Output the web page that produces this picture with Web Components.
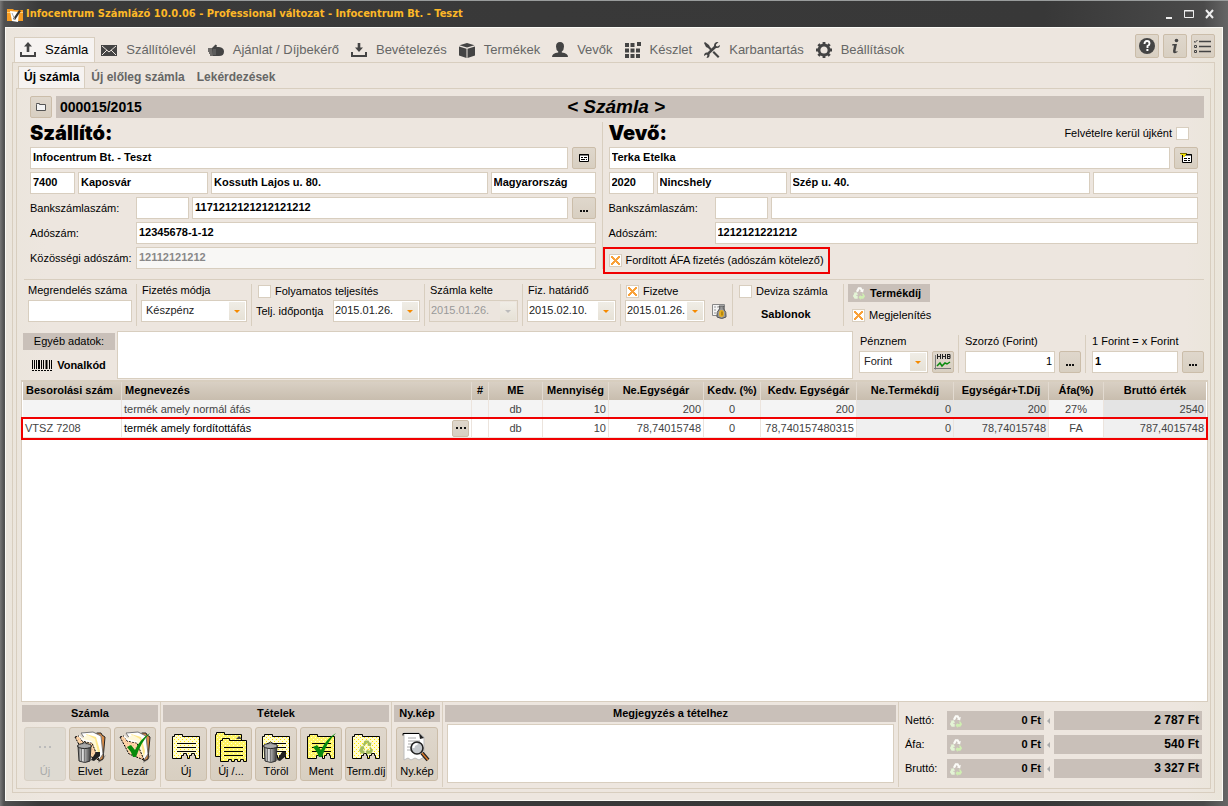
<!DOCTYPE html>
<html lang="hu">
<head>
<meta charset="utf-8">
<meta name="viewport" content="width=device-width, initial-scale=1">
<title>Infocentrum Számlázó</title>
<style>
  body { margin: 0; font: 11px/13px "Liberation Sans", Arial, sans-serif; color: #000;
    --paper: #ede6df; --line: #d8cebf; --bar: #c9c0b9; --accent: #f9a13a; --ink: #444; }
</style>
</head>
<body>
<app-window heading="Infocentrum Számlázó 10.0.06 - Professional változat - Infocentrum Bt. - Teszt">
  <main-tabs></main-tabs>
  <invoice-page></invoice-page>
</app-window>

<script>
const NOTE = '<path d="M2.500 5.500h2v-2h8v2h17v22h-4v-3h-1v-2h-3v2h-2v3h-2v-3h-1v-2h-3v2h-2v3h-9z" fill="url(#dots)" stroke="#000"/>';
const LINES = '<path d="M7 12.500h19M7 16.500h19M7 20.500h19" stroke="#000"/>';
const DOTS = '<defs><pattern id="dots" width="4" height="4" patternUnits="userSpaceOnUse"><path fill="#fffcd0" d="M0 0h4v4H0z"/><path fill="#ffe600" d="M0 0h1v1H0zM2 2h1v1H2z"/></pattern><pattern id="gold" width="4" height="4" patternUnits="userSpaceOnUse"><path fill="#fff565" d="M0 0h4v4H0z"/><path fill="#fffcd8" d="M0 0h1v1H0zM2 2h1v1H2z"/></pattern><pattern id="peach" width="4" height="4" patternUnits="userSpaceOnUse"><path fill="#fdd5a6" d="M0 0h4v4H0z"/><path fill="#f0b096" d="M0 0h1v1H0zM2 2h1v1H2z"/></pattern><linearGradient id="steel"><stop stop-color="#555"/><stop offset=".3" stop-color="#e8e8e8"/><stop offset=".6" stop-color="#999"/><stop offset="1" stop-color="#333"/></linearGradient></defs>';
const TRASH = '<path d="M17 29l5-8h4v4l-6 5z" fill="#222"/><path d="M4 15h13l-1 15q-5 3-11 0z" fill="url(#steel)" stroke="#333"/><path d="M7.500 17v13M10.500 17v14M13.500 17v13" stroke="#777"/><ellipse cx="10.500" cy="15" rx="7" ry="2.500" fill="#aaa" stroke="#222"/><path d="M8 12.500q2.500-3 5 0" fill="#ccc" stroke="#222"/>';
const FOLDERS = '<path d="M25 28l7-4-3 5-5 3z" fill="#555" opacity=".5"/><path d="M20 4l3-2h4l1 2 3 2-2 22-4 2z" fill="#d98b45" stroke="#222"/><path d="M7 2l12-1 8 4 2 18-4 6z" fill="#fff" stroke="#777"/><path d="M12 3l10 3 4 14-1 6z" fill="#ffe88a"/><path d="M8 7l6-3 7 4 4 18-5-3z" fill="#fff8d8"/><path d="M1 6l4-1 3 5 10 2 7 17-15-6z" fill="url(#peach)" stroke="#000" stroke-dasharray="2 1"/><path d="M5 5l4 4 9 2" stroke="#fff" stroke-width="1.500" fill="none"/>';
const CHECK = '<path d="M8 16l4-2 4 5q5-11 15-17-9 9-14 24h-3q-2-6-6-10z" fill="#078a0c"/>';
const CYCLE = ['M4.500 6L7 1.500h3.500L12 4l1.500-.8-.8 4.300L8.800 6l1.300-.7-1.300-1.800L6.800 7z', 'M13 8.500l2 3.200-2 3H9.800V16l-2.300-3.200L9.800 10v1.500h2.100l.5-1L11 8.700z', 'M6.500 14.500H3l-2-3 1.700-3-1.200-.7L5.600 7l1.300 3.800-1.300-.7-.8 1.400h1.700z'];

const ICONS = {
  app: [16, '<path d="M0 3h6l1 1h9v11H0z" fill="#f59c24"/><path d="M0 6h16v1H0z" fill="#ffd27c"/><path d="M3 5l9 1-1 10-6-1z" fill="#fff"/><path d="M6 13L12 4l2 1-6 9z" fill="#333"/><path d="M5 7l3 7" stroke="#aaa"/>'],
  upload: [16, '<path d="M8 0l4 4.500H9.300V10H6.700V4.500H4zM0 10h2v3h12v-3h2v5H0z"/>'],
  download: [16, '<path d="M8 10l4-4.500H9.300V1H6.700v4.500H4zM0 10h2v3h12v-3h2v5H0z"/>'],
  mail: [16, '<path d="M0 3h16v11H0z"/><path d="M1 4l7 6 7-6M1 13l5-5M15 13l-5-5" fill="none" stroke="#ede6df"/>'],
  hand: [16, '<path d="M4 6l3.500-3.500L9 3.500 8.500 5H11q5 .7 5 4.500Q16 14 11 14H5z"/><path d="M0 7h7M0 9h6M1 11h6M2 13h5" stroke="#444" stroke-width="1.400"/><path d="M5 8h3M5 10h3M5 12h3" stroke="#999" stroke-width=".6"/>'],
  box: [16, '<path d="M8 1l7.500 2.300L8 5.600.5 3.300z"/><path d="M0 4.500l7.500 2.200V16L0 13.500zM16 4.500L8.500 6.700V16L16 13.500z"/>'],
  user: [16, '<path d="M8 0q4 0 4 4.500Q12 8 9.800 9.500v1Q16 11 16 15H0q0-4 6.200-4.500v-1Q4 8 4 4.500 4 0 8 0z"/>'],
  grid: [16, '<path d="M0 1h4v4H0zM5.500 1h4v4h-4zM12 0h4v4h-4zM0 6.500h4v4H0zM5.500 6.500h4v4h-4zM11 6.500h4v4h-4zM0 12h4v4H0zM5.500 12h4v4h-4zM11 12h4v4h-4z"/>'],
  tools: [16, '<path d="M1 0l4 3 1 2 3 3-1.500 1.500L4 6 2 5 0 1zM10 9l5.500 5.500-1.500 1.500L8.500 10.500z"/><path d="M16 3l-2.500 1.500L12 4V2.500L14.500 0Q10-.5 10 4L3.500 10.500Q0 10 0 14l2.500-1.500 1 1L2.500 16Q6 16 5.500 12L12 6q4 .5 4-3z"/>'],
  gear: [16, '<path d="M8 3a5 5 0 100 10A5 5 0 008 3z" fill="none" stroke="#444" stroke-width="2.800"/><path d="M6.600 0h2.800v3H6.600zM6.600 13h2.800v3H6.600zM0 6.600h3v2.800H0zM13 6.600h3v2.800h-3zM1.400 3.300l2-2 2 2-2 2zM10.700 12.700l2-2 2 2-2 2zM1.400 12.700l2-2 2 2-2 2zM10.700 3.300l2-2 2 2-2 2z"/>'],
  help: [16, '<circle cx="8" cy="8" r="8"/><path d="M5.500 6q0-3 2.500-3t2.500 2.400Q10.500 7 8.500 8v2" fill="none" stroke="#fff" stroke-width="1.900"/><path d="M7.400 11h2v2h-2z" fill="#fff"/>'],
  info: [16, '<circle cx="9.500" cy="2.500" r="1.800"/><path d="M5.500 6H10L8.500 13q0 1 2 0v1Q6 17 6 13l1-5.500H5z"/>'],
  list: [18, '<path d="M5 4.500h12M5 9.500h12M5 14.500h12" stroke="#444" stroke-width="1.500"/><path d="M0 4l1 1.500L3.500 3M.5 8.500h2v2h-2zM.5 13.500h2v2h-2z" fill="none" stroke="#444"/>'],
  folder: [12, '<path d="M1.500 3.500V2.500h3v1h6v6h-9z" fill="#f4f4f4" stroke="#555"/>'],
  card: [12, '<path d="M1.500 2.500h9v7h-9z" fill="#fff" stroke="#000"/><path d="M1 3h10" stroke="#000"/><path d="M3 5.500h2M6 5.500h3M3 7.500h4M8 7.500h1" stroke="#000"/>'],
  cardnew: [12, '<path d="M2.500 2.500h9v8h-9z" fill="#fff" stroke="#000"/><path d="M2 3h10" stroke="#000"/><path d="M4 6.500h3M8 6.500h2M4 8.500h3M8 8.500h2" stroke="#000"/><path d="M0 1h6v2H5v2H3V3H1z" fill="#f0e000"/><path d="M0 1.500h7" stroke="#776b00"/>'],
  dots: [12, '<path d="M2 8h2v2H2zM5 8h2v2H5zM8 8h2v2H8z" fill="#111"/>'],
  middots: [12, '<path d="M1 5h2v2H1zM5 5h2v2H5zM9 5h2v2H9z" fill="#111"/>'],
  money: [16, '<path d="M1.500 1.500h12v11h-12z" fill="#f4f4f4" stroke="#888"/><path d="M3 4h2M3 7h2M3 10h2M6 4h3" stroke="#999"/><path d="M8 3h5l-1 2q4 4 3 9-4 3-9 0-1-5 3-9z" fill="#999" stroke="#555"/><ellipse cx="10.500" cy="10.500" rx="2.500" ry="3.500" fill="#e8b020"/><path d="M11 8.500v4" stroke="#846000"/>'],
  chart: [18, '<path d="M1.500 2v14.500M0 15.500h17" stroke="#777"/><path d="M3 13l3-3 2 3 3-3 2 1 3-2" fill="none" stroke="#078a0c" stroke-width="1.500"/><path d="M3.500 1v5M6.500 1v5M3.500 3.500h3M8.500 1v5M11.500 1v5M8.500 3.500h3M13.500 1v5M13 1.500h3v4h-3M13 3.500h3" fill="none" stroke="#222"/>'],
  barcode: [20, '<path d="M.5 5v9M2.500 5v9M4.500 5v9M9.500 5v9M11.500 5v9M17.500 5v9M19.500 5v9" stroke="#000"/><path d="M7 5v9M14.500 5v9" stroke="#000" stroke-width="2"/><path d="M0 15.500h20" stroke="#000" stroke-dasharray="2 1"/>'],
  recycle: [16, `<path d="${CYCLE[0]}" fill="#fbfbf7"/><path d="${CYCLE[1]}" fill="#cfeeb2"/><path d="${CYCLE[2]}" fill="#e4f4d6"/>`],
  discard: [32, DOTS + FOLDERS + TRASH],
  close: [32, DOTS + FOLDERS + CHECK],
  item: [32, DOTS + NOTE + LINES],
  items: [32, DOTS + '<path d="M.5 3.500h1v-2h8v2h17v22h-26z" fill="url(#gold)" stroke="#000"/><path d="M21 8l3-3 3 3z"/><path d="M5.500 9.500h2v-2h7v2h17v21h-3v-2h-3v2h-3v-2h-3v2h-3v-2h-3v2h-8z" fill="url(#gold)" stroke="#000"/><path d="M9 16.500h19M9 20.500h19M9 24.500h19" stroke="#000"/>'],
  remove: [32, DOTS + NOTE + LINES + TRASH],
  save: [32, DOTS + NOTE.replace('dots', 'gold') + LINES + CHECK],
  fee: [32, DOTS + NOTE + `<path transform="translate(8 8)" d="${CYCLE.join('')}" fill="#a3bd5c"/>`],
  preview: [32, '<path d="M3 2h15l5 4v20l-5 3-4-2-4 2-3-2-4 2z" fill="#fff" stroke="#bbb"/><path d="M2 4.500V2.500h16" stroke="#000" fill="none"/><path d="M18 2l1 6 4-1z" fill="#222"/><path d="M7 7h8M7 10h12M7 13h5M6 16h4M6 19h4" stroke="#aaa"/><path d="M21 22l6 7" stroke="#222" stroke-width="4"/><path d="M21 22l6 7" stroke="#d8782a" stroke-width="1.500"/><circle cx="16" cy="17" r="6" fill="#c4c8cc" stroke="#222" stroke-width="1.600"/><path d="M12.500 17q0-4 4-4" stroke="#fff" fill="none" stroke-width="2"/>'],
  none: [32, '<path d="M10 15h2v2h-2zM15 15h2v2h-2zM20 15h2v2h-2z" fill="#bbb"/>']
};

/* Base element: subclasses give their stylesheet and markup. */
class Part extends HTMLElement {
  connectedCallback() {
    if (this.shadowRoot) return;
    const t = document.createElement('template');
    t.innerHTML = `<style>:host{display:block}*{box-sizing:border-box}${this.css}</style>${this.html}`;
    this.attachShadow({ mode: 'open' }).append(t.content.cloneNode(true));
  }
  get css() { return ''; }
  a(name, fallback = '') { return this.getAttribute(name) ?? fallback; }
}
const define = (tag, css, html) => customElements.define(tag, class extends Part {
  get css() { return css; }
  get html() { return html(this); }
});

define('ui-icon', ':host{display:inline-block;flex:none}svg{display:block;fill:#444}',
  e => { const [box, body] = ICONS[e.a('name')]; const s = e.a('size', box);
    return `<svg width="${s}" height="${s}" viewBox="0 0 ${box} ${box}" aria-hidden="true">${body}</svg>`; });

/* Text input, with its caption before it or (stack) above it. */
define('text-box', `
  .wrap{display:flex;align-items:center;height:22px}
  :host([stack]) .wrap{display:block;height:auto}
  label{flex:none;width:106px}
  :host([stack]) label{display:block;width:auto;height:14px;margin-bottom:2px;white-space:nowrap}
  input{display:block;flex:1;width:100%;min-width:0;height:22px;margin:0;padding:0 2px 2px;border:1px solid var(--line);border-radius:0;background:#fff;color:#000;font:inherit;outline:0}
  :host([bold]) input{font-weight:bold}
  :host([right]) input{text-align:right}
  input:disabled{background:#f8f7f5;color:#888}`,
  e => `<div class="wrap">${e.a('caption') && `<label for="i">${e.a('caption')}</label>`}
    <input id="i" value="${e.a('value')}" ${e.a('caption') ? '' : `aria-label="${e.a('name')}"`} ${e.hasAttribute('off') ? 'disabled' : ''}></div>`);

define('drop-box', `
  label{display:block;height:14px;margin-bottom:2px;padding-left:1px;white-space:nowrap}
  .wrap{position:relative}
  select{display:block;width:100%;height:22px;margin:0;padding:0 2px 1px 4px;border:1px solid var(--line);border-radius:0;background:#fff;color:#222;font:inherit;appearance:none;outline:0}
  :host([date]) select{padding-left:1px}
  select:disabled{background:#ece5de;color:#999;opacity:1}
  .wrap::before{content:"";position:absolute;right:2px;top:2px;bottom:2px;width:16px;background:linear-gradient(#f0ede6,#e6e1d6);pointer-events:none}
  .wrap::after{content:"";position:absolute;right:7px;top:10px;border:3px solid transparent;border-top-color:#f58a00;border-bottom:0;pointer-events:none}
  :host([off]) .wrap::after{border-top-color:#bbb}`,
  e => `${e.a('caption') && `<label for="s">${e.a('caption')}</label>`}<div class="wrap"><select id="s" ${e.a('caption') ? '' : `aria-label="${e.a('name')}"`} ${e.hasAttribute('off') ? 'disabled' : ''}><option>${e.a('value')}</option></select></div>`);

define('check-box', `
  label{display:flex;align-items:center;gap:4px;height:14px;white-space:nowrap}
  :host([before]) label{flex-direction:row-reverse}
  input{flex:none;appearance:none;width:13px;height:13px;margin:0;border:1px solid var(--line);background:#fff}
  input:checked{background:
    linear-gradient(45deg,transparent 42%,var(--accent) 42%,var(--accent) 58%,transparent 58%) center/9px 9px no-repeat,
    linear-gradient(-45deg,transparent 42%,var(--accent) 42%,var(--accent) 58%,transparent 58%) center/9px 9px no-repeat,#fff}`,
  e => `<label><input type="checkbox" ${e.hasAttribute('checked') ? 'checked' : ''}><slot></slot></label>`);

define('icon-button', `
  button{display:flex;align-items:center;justify-content:center;width:100%;height:100%;margin:0;padding:0;border:1px solid #cbbda9;border-radius:2px;background:linear-gradient(#dfd7cc,#d8cfc1);font:inherit}`,
  e => `<button type="button" aria-label="${e.a('name')}"><ui-icon name="${e.a('icon')}"></ui-icon></button>`);

define('action-button', `
  :host{width:42px}
  button{display:flex;flex-direction:column;align-items:center;width:100%;height:54px;margin:0;padding:3px 0 0;border:1px solid #cbbda9;border-radius:3px;background:linear-gradient(#dfd7cc,#d8cfc1);font:inherit;color:#000;white-space:nowrap}
  ui-icon{margin-bottom:2px}
  button:disabled{color:#aaa;border-color:#d8d0c4;background:#dedad2}`,
  e => `<button type="button" ${e.hasAttribute('off') ? 'disabled' : ''}><ui-icon name="${e.a('icon')}"></ui-icon><slot></slot></button>`);

define('section-bar', ':host{height:17px;background:var(--bar);font-weight:bold;text-align:center;line-height:17px;white-space:nowrap}', () => '<slot></slot>');

define('app-window', `
  :host{display:flex;flex-direction:column;min-height:100vh;padding:0 5px 5px;background:linear-gradient(90deg,#777 0,#505050 4px,#3a3a3a 40px,#383838 85%,#4a4a4a 98%,#666 100%);border-top:1px solid #999c9c;box-sizing:border-box}
  header{display:flex;align-items:center;height:26px;padding:0 6px 0 2px;gap:3px}
  h1{flex:1;margin:0;font:bold 11px/16px "DejaVu Sans Condensed","Noto Sans",sans-serif;color:#fdb827;white-space:nowrap}
  .ctl{display:flex;gap:4px}
  .ctl button{width:16px;height:16px;margin:0;padding:0;border:0;background:none}
  svg{display:block}
  main{flex:1;display:flex;flex-direction:column;padding:6px 7px 7px 6px;border:1px solid #fbfaf5;background:linear-gradient(90deg,#ebe5dc,var(--paper) 40px,var(--paper) 97%,#eae5da)}`,
  e => `<header><ui-icon name="app"></ui-icon><h1>${e.a('heading')}</h1><div class="ctl">
    <button aria-label="Kis méret"><svg width="16" height="16"><path d="M5 11h6v2H5z" fill="#eee"/></svg></button>
    <button aria-label="Teljes méret"><svg width="16" height="16"><path d="M3.500 4.500h9v7h-9zM3 5h10" fill="none" stroke="#eee"/></svg></button>
    <button aria-label="Bezárás"><svg width="16" height="16"><path d="M5 4l7 8M12 4l-7 8" stroke="#eee" stroke-width="2"/></svg></button></div></header>
    <main><slot></slot></main>`);

define('main-tabs', `
  :host{display:flex;align-items:flex-end;height:28px}
  nav{display:flex;flex:1;padding-left:2px;align-self:flex-end}
  button.tab{display:flex;align-items:center;gap:9px;height:25px;margin:0;padding:1px 6px 0 6px;border:0;background:none;font:13px/16px "Liberation Sans",Arial,sans-serif;color:#666;white-space:nowrap}
  button.on{padding:0 6px 1px 5px;border:1px solid var(--line);border-bottom:0;background:#f6f3f1;color:#000}
  .side{display:flex;gap:4px;align-self:flex-start}
  icon-button{width:24px;height:24px}`,
  () => `<nav>${[['upload', 'Számla'], ['mail', 'Szállítólevél'], ['hand', 'Ajánlat / Díjbekérő'], ['download', 'Bevételezés'], ['box', 'Termékek'], ['user', 'Vevők'], ['grid', 'Készlet'], ['tools', 'Karbantartás'], ['gear', 'Beállítások']]
    .map(([i, t], n) => `<button type="button" class="tab ${n ? '' : 'on'}"><ui-icon name="${i}"></ui-icon><span>${t}</span></button>`).join('')}</nav>
    <div class="side"><icon-button icon="help" name="Súgó"></icon-button><icon-button icon="info" name="Névjegy"></icon-button><icon-button icon="list" name="Lista"></icon-button></div>`);

define('invoice-page', `
  :host{flex:1;display:flex;flex-direction:column;border:1px solid var(--line);padding:3px 3px}
  nav{display:flex;padding-left:2px}
  nav button{height:22px;margin:0;padding:0 6px;border:0;background:none;font:bold 12px/16px "Liberation Sans",Arial,sans-serif;color:#666;white-space:nowrap}
  nav button.on{padding:0 5px 2px;border:1px solid var(--line);border-bottom:0;background:#f6f3f1;color:#000}
  .page{flex:1;display:flex;flex-direction:column;border:1px solid var(--line);padding:7px 2px 1px 4px}
  .head{display:flex;gap:4px;padding:0 4px 0 9px}
  icon-button{width:22px;height:22px}
  .bar{flex:1;display:grid;grid-template-columns:1fr auto 1fr;align-items:center;padding:0 32px 0 4px;background:var(--bar)}
  .bar b{font-size:14px}
  h2{margin:0;font:italic bold 19px/22px "Liberation Sans",Arial,sans-serif}
  .parties{display:grid;grid-template-columns:566fr 1px 590fr;gap:6px;padding:4px 10px 10px 9px}
  .sep{background:var(--line)}
  hr{width:calc(100% - 7px);height:1px;margin:0 0 4px 3px;border:0;background:var(--line)}`,
  () => `<nav><button class="on">Új számla</button><button>Új előleg számla</button><button>Lekérdezések</button></nav>
  <div class="page">
    <div class="head"><icon-button icon="folder" name="Megnyitás"></icon-button><div class="bar"><b>000015/2015</b><h2>&lt; Számla &gt;</h2><i></i></div></div>
    <div class="parties">
      <party-panel heading="Szállító:" name="Infocentrum Bt. - Teszt" zip="7400" city="Kaposvár" street="Kossuth Lajos u. 80." country="Magyarország" account="1171212121212121212" tax="12345678-1-12" icon="card" bankpick>
        <text-box bold off caption="Közösségi adószám:" value="12112121212"></text-box></party-panel>
      <div class="sep"></div>
      <party-panel heading="Vevő:" name="Terka Etelka" zip="2020" city="Nincshely" street="Szép u. 40." tax="1212121221212" icon="cardnew">
        <check-box slot="top" before>Felvételre kerül újként</check-box>
        <marked-option>Fordított ÁFA fizetés (adószám kötelező)</marked-option></party-panel>
    </div>
    <hr>
    <terms-bar></terms-bar>
    <extra-bar></extra-bar>
    <items-grid></items-grid>
    <bottom-bar></bottom-bar>
  </div>`);

define('marked-option', ':host{display:flex;align-items:center;width:max-content;height:27px;margin:0 0 -5px -6px;padding:0 4px 0 4px;border:2px solid #f00000;box-sizing:border-box}', () => '<check-box checked><slot></slot></check-box>');

define('party-panel', `
  :host{display:flex;flex-direction:column;gap:3px;min-width:0}
  .row{display:flex;gap:3px}
  .row.pick{gap:4px}
  h3{flex:1;margin:0;font:900 20px/22px Inter,"Liberation Sans",sans-serif}
  .top{align-items:center;padding-right:9px;height:22px}
  .fill{flex:1}.zip{width:45px}.city{width:130px}.land{width:105px}.bank{width:159px}
  icon-button{width:24px;height:22px}`,
  e => `<div class="row top"><h3>${e.a('heading')}</h3><slot name="top"></slot></div>
  <div class="row pick"><text-box bold class="fill" name="Név" value="${e.a('name')}"></text-box><icon-button icon="${e.a('icon')}" name="Kiválasztás"></icon-button></div>
  <div class="row"><text-box bold class="zip" name="Irányítószám" value="${e.a('zip')}"></text-box><text-box bold class="city" name="Város" value="${e.a('city')}"></text-box><text-box bold class="fill" name="Utca" value="${e.a('street')}"></text-box><text-box bold class="land" name="Ország" value="${e.a('country')}"></text-box></div>
  <div class="row pick"><div class="row fill"><text-box bold class="bank" caption="Bankszámlaszám:"></text-box><text-box bold class="fill" name="Számlaszám" value="${e.a('account')}"></text-box></div>${e.hasAttribute('bankpick') ? '<icon-button icon="dots" name="Bankszámlák"></icon-button>' : ''}</div>
  <text-box bold caption="Adószám:" value="${e.a('tax')}"></text-box>
  <slot></slot>`);

define('terms-bar', `
  :host{display:grid;grid-template-columns:112px 115px 173px 98px 98px 112px 111px 1fr;height:42px;margin:0 0 5px 3px}
  .g{padding:0 4px;border-left:1px solid var(--line);min-width:0}
  .g:first-of-type{border-left:0}
  .line{display:flex;align-items:center;gap:6px;height:22px;margin-top:2px}
  .line span{flex:1;white-space:nowrap}
  button{display:flex;align-items:center;margin:0;padding:0;border:0;background:none;font:bold 11px/13px "Liberation Sans",Arial,sans-serif}
  .fee{gap:4px;height:18px;padding:0 9px 0 3px;background:var(--bar)}
  .fee ui-icon{margin-left:1px}`,
  () => `<div class="g"><text-box stack caption="Megrendelés száma"></text-box></div>
  <div class="g"><drop-box caption="Fizetés módja" value="Készpénz"></drop-box></div>
  <div class="g"><check-box style="padding-left:2px">Folyamatos teljesítés</check-box><div class="line"><span>Telj. időpontja</span><drop-box date style="width:87px" name="Telj. időpontja" value="2015.01.26."></drop-box></div></div>
  <div class="g"><drop-box date off caption="Számla kelte" value="2015.01.26."></drop-box></div>
  <div class="g"><drop-box date caption="Fiz. határidő" value="2015.02.10."></drop-box></div>
  <div class="g"><check-box checked style="padding-left:1px">Fizetve</check-box><div class="line"><drop-box date style="width:80px" name="Fizetve" value="2015.01.26."></drop-box><button aria-label="Kifizetés"><ui-icon name="money"></ui-icon></button></div></div>
  <div class="g"><check-box style="padding-left:2px">Deviza számla</check-box><div class="line" style="padding:6px 0 0 24px"><button>Sablonok</button></div></div>
  <div class="g"><button class="fee"><ui-icon name="recycle" size="14"></ui-icon>Termékdíj</button><check-box checked style="padding:6px 0 0 4px">Megjelenítés</check-box></div>`);

define('extra-bar', `
  :host{display:flex;height:48px;margin:0 0 1px 2px}
  .left{width:92px;margin-right:2px;padding-top:2px}
  button{display:flex;align-items:center;justify-content:center;gap:5px;width:100%;height:17px;margin:0;padding:0;border:0;background:var(--bar);font:11px/13px "Liberation Sans",Arial,sans-serif;white-space:nowrap}
  button.code{height:20px;margin-top:5px;background:none;font-weight:bold}
  textarea{flex:1;min-width:0;height:48px;margin:0;padding:2px;border:1px solid var(--line);background:#fff;resize:none;font:inherit;outline:0}
  .g{display:flex;align-items:flex-end;gap:4px;height:38px;margin-top:4px;padding:0 4px 0 6px;border-left:1px solid var(--line)}
  .g.first{border:0}
  icon-button{width:22px;height:22px}`,
  () => `<div class="left"><button>Egyéb adatok:</button><button class="code"><ui-icon name="barcode"></ui-icon>Vonalkód</button></div>
  <textarea aria-label="Egyéb adatok"></textarea>
  <div class="g first"><drop-box style="width:69px" caption="Pénznem" value="Forint"></drop-box><icon-button icon="chart" name="MNB árfolyam"></icon-button></div>
  <div class="g"><text-box stack right style="width:90px" caption="Szorzó (Forint)" value="1"></text-box><icon-button icon="dots" name="Szorzó kiválasztása"></icon-button></div>
  <div class="g"><text-box stack bold style="width:86px" caption="1 Forint = x Forint" value="1"></text-box><icon-button icon="dots" name="Árfolyam kiválasztása"></icon-button></div>`);

define('items-grid', `
  :host{flex:1;padding:0 1px;border:1px solid var(--line);border-top-width:2px;background:#fff}
  table{width:100%;table-layout:fixed;border-collapse:separate;border-spacing:0}
  th{height:18px;padding:0 0 1px;border-left:1px solid #e2dad0;background:linear-gradient(#d9d0c4,#c8bdae);font-weight:bold;white-space:nowrap}
  th:first-child{border-left:0}
  th.l{text-align:left;padding-left:3px}
  td{height:19px;padding:0 2px;border:0 solid #ece4dd;border-width:0 0 1px 1px;color:var(--ink);text-align:right;white-space:nowrap}
  td:first-child{border-left:0}
  td.l{text-align:left}td.c{text-align:center}
  .alt td{background:#f4f4f4}
  td.calc{background:#f0f0f0}
  .alt td.calc{background:#e4e4e4}
  .mark{outline:2px solid #f00000}
  .name{display:flex;align-items:center;justify-content:space-between;color:#000}
  icon-button{width:17px;height:17px}`,
  () => `<table><colgroup>${[98, 0, 17, 54, 66, 95, 57, 96, 97, 95, 55, 103].map(w => w ? `<col style="width:${w}px">` : '<col>').join('')}</colgroup>
  <thead><tr><th class="l">Besorolási szám</th><th class="l">Megnevezés</th>${['#', 'ME', 'Mennyiség', 'Ne.Egységár', 'Kedv. (%)', 'Kedv. Egységár', 'Ne.Termékdíj', 'Egységár+T.Díj', 'Áfa(%)', 'Bruttó érték'].map(t => `<th>${t}</th>`).join('')}</tr></thead>
  <tbody>${[['alt', '', 'termék amely normál áfás', '', 'db', '10', '200', '0', '200', '0', '200', '27%', '2540'],
    ['mark', 'VTSZ 7208', '<div class="name">termék amely fordítottáfás<icon-button icon="middots" name="Termék kiválasztása"></icon-button></div>', '', 'db', '10', '78,74015748', '0', '78,740157480315', '0', '78,74015748', 'FA', '787,4015748']]
    .map(([k, ...c]) => `<tr class="${k}">${c.map((t, i) => `<td class="${['l', 'l', 'c', 'c', '', '', 'c', '', 'calc', 'calc', 'c', 'calc'][i]}">${t}</td>`).join('')}</tr>`).join('')}</tbody></table>`);

define('bottom-bar', `
  :host{display:flex;height:85px;padding-left:1px}
  .g{padding:3px 2px 0;border-left:1px solid var(--line)}
  .g:first-of-type{padding-left:0;border-left:0}
  .g.memo{flex:1;min-width:0}
  .btns{display:flex;gap:3px;padding:5px 2px 0}
  textarea{display:block;width:calc(100% - 4px);height:59px;margin:2px 2px 0;padding:2px;border:1px solid var(--line);background:#fff;resize:none;font:inherit;outline:0}
  totals-box{width:310px;border-left:1px solid var(--line)}`,
  () => `<div class="g"><section-bar>Számla</section-bar><div class="btns"><action-button off icon="none">Új</action-button><action-button icon="discard">Elvet</action-button><action-button icon="close">Lezár</action-button></div></div>
  <div class="g"><section-bar>Tételek</section-bar><div class="btns"><action-button icon="item">Új</action-button><action-button icon="items">Új /...</action-button><action-button icon="remove">Töröl</action-button><action-button icon="save">Ment</action-button><action-button icon="fee">Term.díj</action-button></div></div>
  <div class="g"><section-bar>Ny.kép</section-bar><div class="btns"><action-button icon="preview">Ny.kép</action-button></div></div>
  <div class="g memo"><section-bar>Megjegyzés a tételhez</section-bar><textarea aria-label="Megjegyzés a tételhez"></textarea></div>
  <totals-box></totals-box>`);

define('totals-box', `
  :host{padding:9px 6px 0;box-sizing:border-box}
  .row{display:flex;align-items:center;height:19px;margin-bottom:5px}
  .row span{width:42px}
  .fee{display:flex;align-items:center;justify-content:space-between;width:97px;height:19px;padding:0 3px 0 2px;background:var(--bar)}
  .arrow{width:3px;height:6px;border:3px solid transparent;border-right-color:#aaa;border-left:0;margin:0 4px 0 3px}
  .sum{flex:1;height:19px;padding-right:3px;background:var(--bar);font-size:12px;line-height:19px;text-align:right}`,
  () => [['Nettó:', '2 787 Ft'], ['Áfa:', '540 Ft'], ['Bruttó:', '3 327 Ft']].map(([l, v]) => `<div class="row"><span>${l}</span><b class="fee"><ui-icon name="recycle" size="14"></ui-icon>0 Ft</b><i class="arrow"></i><b class="sum">${v}</b></div>`).join(''));
</script>
</body>
</html>
